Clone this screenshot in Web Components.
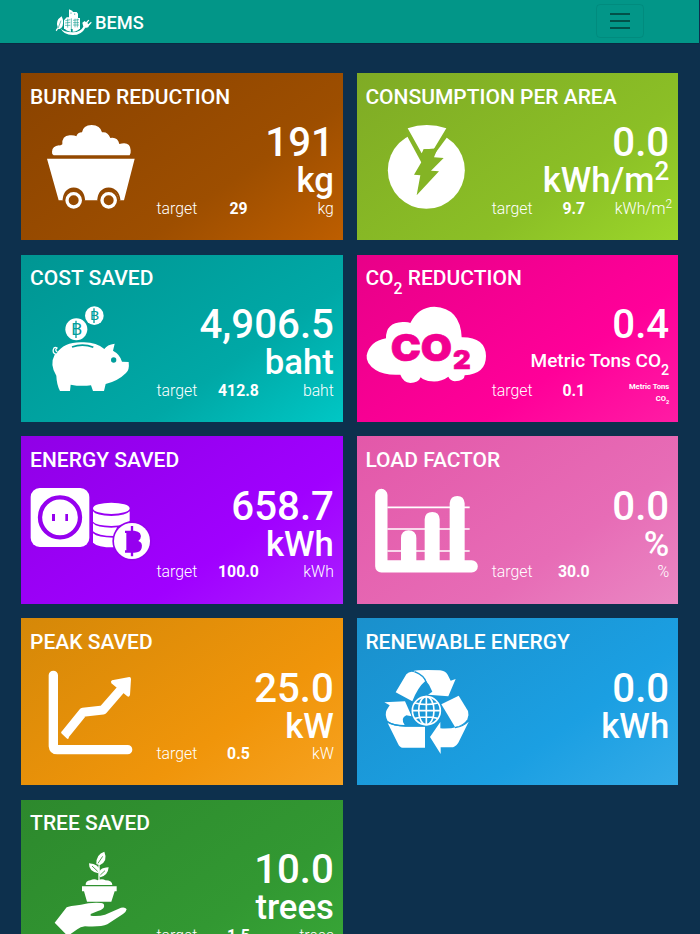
<!DOCTYPE html>
<html lang="en">
<head>
<meta charset="utf-8">
<meta name="viewport" content="width=device-width, initial-scale=1">
<title>BEMS</title>
<style>
  body {
    margin: 0;
    height: 934px;
    overflow: hidden;
    background: #0d304d;
    color: #fff;
    font-family: Roboto, "Liberation Sans", sans-serif;
  }
  sup, sub { font-size: .75em; line-height: 0; }
  sup { vertical-align: .48em; }
  sub { vertical-align: -.58em; }
</style>
</head>
<body>
<bems-navbar>BEMS</bems-navbar>
<metric-board>
  <metric-card icon="cart" style="--from:#8a4300;--mid:#9d4e00;--to:#bd5e00;--cut:#914700">
    <span slot="title">BURNED REDUCTION</span>
    <span slot="value">191</span><span slot="unit">kg</span>
    <span slot="target">29</span><span slot="target-unit">kg</span>
  </metric-card>
  <metric-card icon="energy" wide style="--from:#7fab25;--mid:#8bbf26;--to:#9bd62a;--cut:#84b425">
    <span slot="title">CONSUMPTION PER AREA</span>
    <span slot="value">0.0</span><span slot="unit">kWh/m<sup>2</sup></span>
    <span slot="target">9.7</span><span slot="target-unit">kWh/m<sup>2</sup></span>
  </metric-card>
  <metric-card icon="pig" style="--from:#009693;--mid:#00a8a6;--to:#00c7c5;--cut:#009d9b">
    <span slot="title">COST SAVED</span>
    <span slot="value">4,906.5</span><span slot="unit">baht</span>
    <span slot="target">412.8</span><span slot="target-unit">baht</span>
  </metric-card>
  <metric-card icon="cloud" small style="--from:#e80088;--mid:#ff0099;--to:#ff1ca4;--cut:#f20090">
    <span slot="title">CO<sub>2</sub> REDUCTION</span>
    <span slot="value">0.4</span><span slot="unit">Metric Tons CO<sub>2</sub></span>
    <span slot="target">0.1</span><span slot="target-unit">Metric Tons CO<sub>2</sub></span>
  </metric-card>
  <metric-card icon="socket" style="--from:#9000e6;--mid:#a000ff;--to:#aa1eff;--cut:#9600ef">
    <span slot="title">ENERGY SAVED</span>
    <span slot="value">658.7</span><span slot="unit">kWh</span>
    <span slot="target">100.0</span><span slot="target-unit">kWh</span>
  </metric-card>
  <metric-card icon="bars" style="--from:#e358a9;--mid:#e76cb6;--to:#ea87c3;--cut:#e563b0">
    <span slot="title">LOAD FACTOR</span>
    <span slot="value">0.0</span><span slot="unit">%</span>
    <span slot="target">30.0</span><span slot="target-unit">%</span>
  </metric-card>
  <metric-card icon="trend" style="--from:#d58808;--mid:#f0950a;--to:#f7a220;--cut:#e18e09">
    <span slot="title">PEAK SAVED</span>
    <span slot="value">25.0</span><span slot="unit">kW</span>
    <span slot="target">0.5</span><span slot="target-unit">kW</span>
  </metric-card>
  <metric-card icon="recycle" bare style="--from:#1a90cc;--mid:#1b9fe2;--to:#33abe8;--cut:#1b98d7">
    <span slot="title">RENEWABLE ENERGY</span>
    <span slot="value">0.0</span><span slot="unit">kWh</span>
  </metric-card>
  <metric-card icon="plant" style="--from:#2d892d;--mid:#329832;--to:#38a837;--cut:#2f912f">
    <span slot="title">TREE SAVED</span>
    <span slot="value">10.0</span><span slot="unit">trees</span>
    <span slot="target">1.5</span><span slot="target-unit">trees</span>
  </metric-card>
</metric-board>

<script>
// All icons share one drawing area of 390 x 285 units, shown at a third of that size
const ICONS = {
  cart: `
    <path d="M116 271Q110 268 111 260Q112 243 132 241Q138 242 142 238Q140 213 164 211Q178 210 184 214Q188 202 201 202Q204 181 230 180Q256 181 261 202Q278 199 286 219Q308 215 313 237Q346 228 347 256Q348 267 344 271Z"/>
    <path d="M96 281H359L327 406H313Q303 370 281 370Q258 370 248 406H209Q200 370 176 370Q153 370 145 406H131Z"/>
    <circle cx="176" cy="406" r="20" fill="none" stroke="#fff" stroke-width="10"/>
    <circle cx="281" cy="406" r="20" fill="none" stroke="#fff" stroke-width="10"/>
    <path class="line" stroke-width="5" d="M145 406Q148 372 176 370Q205 372 208 406M249 406Q252 372 281 370Q310 372 314 406"/>`,
  energy: `
    <circle cx="229" cy="316" r="115.500"/>
    <path class="cut" d="M164 190L174 218L215 294L250 272L290 218L300 190Z"/>
    <path d="M173 190Q230 170 289 190L252 251L221 253L215 265Z"/>
    <path class="cut" d="M221 253L252 251L267 240L252 277L281 279L243 317L267 319L200 391L211 331L192 329L214 292Z"/>`,
  pig: `
    <circle cx="184" cy="247" r="33"/><circle cx="238" cy="206" r="28"/>
    <g class="coin"><text x="169" y="263" font-size="47" textLength="33" lengthAdjust="spacingAndGlyphs">B</text>
    <text x="225" y="220" font-size="41" textLength="28" lengthAdjust="spacingAndGlyphs">B</text></g>
    <path class="line" stroke-width="4" d="M183 221V273M237 184V228"/>
    <path d="M125 319Q146 286 197 286Q242 283 268 306Q276 293 299 290L294 311Q315 322 321 344L341 345Q344 369 333 378Q309 402 272 411L267 432H234L228 415Q197 419 167 413L165 432H135Q125 413 124 386Q103 352 119 323Z"/>
    <path d="M124 322Q109 317 117 303Q121 299 126 303Q118 309 127 315" fill="none" stroke="#fff" stroke-width="4"/>
    <path class="line" stroke-width="5" d="M171 300Q204 288 235 301"/>
    <circle class="cut" cx="296" cy="339" r="8"/>`,
  cloud: `
    <path d="M108 274Q107 227 158 225Q174 224 181 228Q204 180 253 179Q331 183 335 271Q406 270 408 327Q408 381 344 385Q344 402 314 403Q300 400 295 389Q272 406 244 403Q224 402 212 391Q205 408 181 408Q159 405 151 383Q103 386 77 369Q47 350 50 325Q59 283 108 274Z"/>
    <g fill="var(--cut)" stroke="var(--cut)" stroke-width="2" font-family="Inter, 'Liberation Sans', sans-serif" font-weight="900">
    <text x="122" y="341" font-size="112" textLength="184" lengthAdjust="spacingAndGlyphs">CO</text>
    <text x="309" y="365" font-size="78" textLength="53" lengthAdjust="spacingAndGlyphs">2</text></g>`,
  socket: `
    <rect x="47" y="177" width="176" height="177" rx="27"/>
    <circle class="line" cx="135" cy="265" r="60" stroke-width="13"/>
    <path class="cut" d="M111 255h9v21h-9zM151 255h8v21h-8z"/>
    <ellipse cx="289" cy="238" rx="55" ry="17"/>
    <path d="M234 247Q243 260 289 261Q335 259 344 247V276Q335 289 289 291Q243 289 234 278ZM234 283Q246 296 289 296L306 295L297 321Q248 321 234 307ZM234 313Q248 326 296 326L296 355Q247 355 234 341Z"/>
    <circle class="cut" cx="351" cy="336" r="59"/><circle cx="351" cy="336" r="54"/>
    <path class="cut" d="M330 305H358Q383 308 376 329L370 336Q384 341 380 357Q377 371 358 371H330V364H334V312H330Z"/>
    <path class="line" stroke-width="7" d="M351 291V309M351 368V382"/>`,
  bars: `
    <path d="M94 198V412H365" fill="none" stroke="#fff" stroke-width="37" stroke-linecap="round" stroke-linejoin="round"/>
    <path d="M112 235H359M112 300H359M112 366H359" stroke="#fff" stroke-width="5"/>
    <path d="M153 410V327Q154 304 176 304Q198 304 199 327V410ZM224 410V271Q225 249 247 249Q268 249 269 271V410ZM299 410V223Q301 201 322 201Q342 201 344 223V410Z"/>`,
  trend: `
    <path d="M115 193V405Q116 416 127 416H338" fill="none" stroke="#fff" stroke-width="28" stroke-linecap="round"/>
    <path d="M150 371L204 304L264 297L323 229" fill="none" stroke="#fff" stroke-width="27" stroke-linejoin="round"/>
    <path d="M142 365L158 380" stroke="#fff" stroke-width="7" stroke-linecap="round"/>
    <path d="M291 208L343 198Q348 198 348 204L345 252Q342 260 336 255L289 217Q286 211 291 208Z"/>`,
  recycle: `
    <path d="M137 244L169 190Q181 176 204 188Q220 197 226 210Q203 229 187 271Z"/>
    <path d="M190 180Q205 176 270 178Q285 179 293 191L302 209L317 204L295 256L234 251L247 242Q230 198 190 180Z"/>
    <path d="M326 254L354 300Q358 313 352 325Q340 344 315 348L274 280Z"/>
    <path d="M356 332L325 395Q316 409 303 409H272V429L240 378L271 333V352Q318 356 356 332Z"/>
    <path d="M103 274L165 271L185 316L169 313Q150 322 164 342Q129 342 113 330Q103 311 110 297L119 283Z"/>
    <path d="M113 336Q130 345 166 347H225V410H158Q149 409 144 398Z"/>
    <path class="line" stroke-width="3.500" d="M194 182Q222 193 229 214M113 333Q130 344 166 345H225M315 350Q342 346 356 329"/>
    <circle class="cut" cx="229" cy="299" r="47"/>
    <g fill="none" stroke="#fff" stroke-width="5"><circle cx="229" cy="299" r="42"/><ellipse cx="229" cy="299" rx="23" ry="42"/>
    <path d="M229 257V341M187 299H271M195 276Q229 285 263 276M195 322Q229 314 263 322"/></g>`,
  plant: `
    <path d="M244 216Q243 187 268 179Q280 207 254 220ZM250 244Q221 239 222 214Q252 217 254 236ZM253 252Q248 227 281 226Q279 250 256 256Z"/>
    <path d="M252 264V220" stroke="#fff" stroke-width="4"/>
    <path class="line" stroke-width="2.500" d="M249 214L263 193M231 222L248 238M256 249L270 236"/>
    <path d="M212 279Q211 267 226 265Q238 259 248 265Q262 259 271 265Q292 265 292 279ZM201 283H305V298H299L289 329H216L207 298H201Z"/>
    <path d="M119 392L155 346Q162 342 198 338Q225 331 258 333Q269 333 267 345Q264 353 249 357L227 366V371Q250 374 270 368L318 347Q331 344 335 352Q334 359 324 366L277 397Q257 406 210 403Q196 405 187 412L158 432Z"/>`
};

class BemsNavbar extends HTMLElement {
  connectedCallback() {
    this.attachShadow({ mode: 'open' });
    this.shadowRoot.innerHTML = `
      <style>
        :host {
          display: block;
          margin-right: 1px;
          background: #029688;
          border-bottom: 1px solid #0a2b43;
        }
        nav {
          box-sizing: border-box;
          height: 42.5px;
          padding: 0 55px 0 55px;
          display: flex;
          align-items: center;
          justify-content: space-between;
        }
        .brand {
          display: flex;
          align-items: center;
          gap: 3px;
          padding-top: 2px;
          font-size: 18.2px;
          font-weight: 500;
        }
        .brand svg { width: 37px; height: 28px; }
        button {
          box-sizing: border-box;
          width: 48px;
          height: 34px;
          padding: 0;
          border: 1px solid rgba(0, 0, 0, .07);
          border-radius: 4px;
          background: none;
        }
        button svg { display: block; margin: 0 auto; }
      </style>
      <nav>
        <div class="brand">
          <svg viewBox="165 25 111 84" fill="#fff">
            <path d="M185 50Q192 65 188 78Q184 88 174 88L170 95L167 92L173 83Q165 63 185 50Z"/>
            <path d="M207 29L218 34V37H230L234 42V55H240V88H192V62L200 53H207Z"/>
            <path d="M182 86Q190 98 218 98Q242 97 250 81L247 69L254 64L258 68L265 60L268 62L262 70L265 74L273 66L275 69L267 78Q266 86 256 84Q245 106 218 106Q190 106 182 86Z"/>
            <path d="M192 85L213 89V96Q198 94 192 85ZM218 88L240 84Q235 95 218 96Z"/>
            <path d="M174 86L183 63M214 56V93M196 63L211 60M195 70L211 68M195 77H211M219 62L237 60M219 69H237M219 76H237M203 57V84M225 57V83M232 57V83M213 38V43M224 41V46" fill="none" stroke="#029688" stroke-width="1.700"/>
          </svg>
          <slot></slot>
        </div>
        <button aria-label="Menu">
          <svg width="20" height="18" stroke="#025049" stroke-width="1.800"><path d="M0 2H20M0 9H20M0 16H20"/></svg>
        </button>
      </nav>
    `;
  }
}

class MetricBoard extends HTMLElement {
  connectedCallback() {
    this.attachShadow({ mode: 'open' });
    this.shadowRoot.innerHTML = `
      <style>
        :host {
          display: grid;
          grid-template-columns: 321.5px 321.5px;
          grid-auto-rows: 167.5px;
          gap: 14.2px 13.8px;
          padding: 29.4px 21.4px;
        }
      </style>
      <slot></slot>
    `;
  }
}

class MetricIcon extends HTMLElement {
  connectedCallback() {
    this.attachShadow({ mode: 'open' });
    this.shadowRoot.innerHTML = `
      <style>
        :host { display: block; width: 130px; height: 95px; }
        svg { display: block; fill: #fff; }
        .cut { fill: var(--cut); }
        .line { fill: none; stroke: var(--cut); }
        .coin { fill: var(--cut); font-weight: 400; }
      </style>
      <svg width="130" height="95" viewBox="30 165 390 285">${ICONS[this.getAttribute('name')]}</svg>
    `;
  }
}

class MetricCard extends HTMLElement {
  connectedCallback() {
    const target = this.hasAttribute('bare') ? '' : `
      <div class="target">
        <span>target</span>
        <b><slot name="target"></slot></b>
        <span class="target-unit"><slot name="target-unit"></slot></span>
      </div>`;
    this.attachShadow({ mode: 'open' });
    this.shadowRoot.innerHTML = `
      <style>
        :host {
          display: block;
          box-sizing: border-box;
          padding: 10.8px 9px 0 3.7px;
          background: linear-gradient(145deg, var(--from), var(--mid) 65%, var(--to));
        }
        h2 {
          margin: 0 0 0 5px;
          font-size: 21px;
          line-height: 26px;
          font-weight: 500;
          white-space: nowrap;
        }
        .body { display: flex; }
        metric-icon { margin-top: 10.8px; }
        .data {
          flex: 1;
          min-width: 0;
          padding-top: 14.8px;
          text-align: right;
          font-weight: 500;
        }
        .value { font-size: 40.2px; line-height: 38px; }
        .unit { height: 36px; font-size: 34.7px; line-height: 36px; white-space: nowrap; }
        .target {
          display: grid;
          grid-template-columns: 43px 78px 1fr;
          margin: .4px 0 0 1.4px;
          font-size: 15.8px;
          line-height: 20px;
          font-weight: 300;
          text-align: left;
        }
        .target b { font-weight: 700; text-align: center; }
        .target-unit { text-align: right; white-space: nowrap; }
        :host([wide]) .target-unit { margin-right: -3px; }
        :host([small]) .unit { font-size: 19px; line-height: 33px; }
        :host([small]) .target-unit {
          padding-left: 12px;
          font-size: 7.6px;
          line-height: 12px;
          font-weight: 700;
          white-space: normal;
        }
      </style>
      <h2><slot name="title"></slot></h2>
      <div class="body">
        <metric-icon name="${this.getAttribute('icon')}"></metric-icon>
        <div class="data">
          <div class="value"><slot name="value"></slot></div>
          <div class="unit"><slot name="unit"></slot></div>
          ${target}
        </div>
      </div>
    `;
  }
}

customElements.define('bems-navbar', BemsNavbar);
customElements.define('metric-board', MetricBoard);
customElements.define('metric-icon', MetricIcon);
customElements.define('metric-card', MetricCard);
</script>
</body>
</html>
